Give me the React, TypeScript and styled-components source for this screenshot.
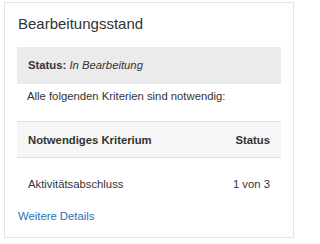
import React from "react";
import styled, { createGlobalStyle } from "styled-components";

const Global = createGlobalStyle`
  html, body { margin: 0; padding: 0; background: #ffffff; }
  body { font-family: "Liberation Sans", Arial, sans-serif; color: #333333; }
`;

const Page = styled.div`
  padding: 2px 0 0 4px;
`;

const Card = styled.section`
  box-sizing: border-box;
  width: 290px;
  border: 1px solid #e3e3e3;
  padding: 12px 12px 13px;
  display: flex;
  flex-direction: column;
`;

const Title = styled.h3`
  margin: 0 0 14px;
  font-size: 15px;
  line-height: 18px;
  font-weight: normal;
  color: #333333;
  padding-left: 1px;
`;

const StatusBox = styled.div`
  background: #ebebeb;
  height: 37px;
  box-sizing: border-box;
  padding: 10px 11px 11px;
  font-size: 11.3px;
  line-height: 16px;
`;

const Label = styled.strong`
  font-weight: bold;
`;

const Note = styled.p`
  margin: 0 0 13px;
  padding: 4px 10px;
  font-size: 11.3px;
  line-height: 16px;
`;

const Table = styled.table`
  width: 100%;
  border-collapse: collapse;
  font-size: 11.3px;
  line-height: 16px;
`;

const HeadRow = styled.tr`
  background: #f6f6f6;
  border-top: 1px solid #e0e0e0;
  border-bottom: 1px solid #e0e0e0;
`;

const Th = styled.th<{ $align?: "left" | "right" }>`
  text-align: ${(p) => p.$align ?? "left"};
  font-weight: bold;
  padding: 10px 11px 9px;
  height: 16px;
`;

const Td = styled.td<{ $align?: "left" | "right" }>`
  text-align: ${(p) => p.$align ?? "left"};
  padding: 18px 11px 10px;
`;

const Link = styled.a`
  margin-top: 6px;
  font-size: 11.3px;
  line-height: 16px;
  color: #2a6ebb;
  text-decoration: none;
  padding-left: 1px;
`;

export default function App() {
  return (
    <>
      <Global />
      <Page>
        <Card>
          <Title>Bearbeitungsstand</Title>
          <StatusBox>
            <Label>Status:</Label> <em>In Bearbeitung</em>
          </StatusBox>
          <Note>Alle folgenden Kriterien sind notwendig:</Note>
          <Table>
            <thead>
              <HeadRow>
                <Th>Notwendiges Kriterium</Th>
                <Th $align="right">Status</Th>
              </HeadRow>
            </thead>
            <tbody>
              <tr>
                <Td>Aktivitätsabschluss</Td>
                <Td $align="right">1 von 3</Td>
              </tr>
            </tbody>
          </Table>
          <Link href="#">Weitere Details</Link>
        </Card>
      </Page>
    </>
  );
}
